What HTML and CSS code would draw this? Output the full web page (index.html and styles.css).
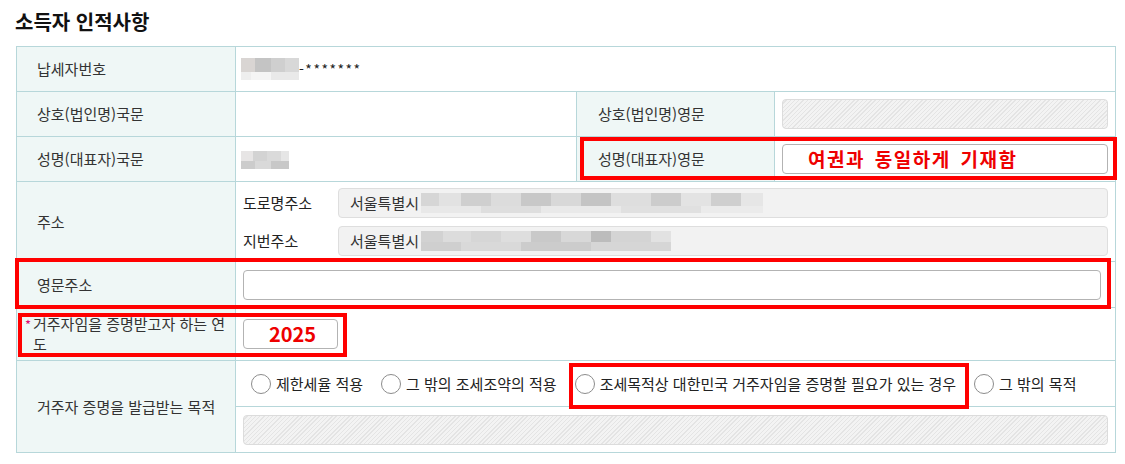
FILE: index.html
```html
<!DOCTYPE html>
<html lang="ko">
<head>
  <meta charset="UTF-8">
  <meta name="viewport" content="width=device-width, initial-scale=1.0">
  <link rel="stylesheet" href="styles.css">
  <title>소득자 인적사항</title>
</head>
<body>
  <div class="sheet">
    <h2 class="title">소득자 인적사항</h2>
    <table class="info">
      <colgroup>
        <col class="c-label">
        <col class="c-value">
        <col class="c-label2">
        <col class="c-value">
      </colgroup>
      <tr class="r45">
        <th>납세자번호</th>
        <td colspan="3"><span class="masked m-id"></span><span class="stars">-*******</span></td>
      </tr>
      <tr class="r45">
        <th>상호(법인명)국문</th>
        <td></td>
        <th class="th2">상호(법인명)영문</th>
        <td><div class="field hatched"></div></td>
      </tr>
      <tr class="r45">
        <th>성명(대표자)국문</th>
        <td><span class="masked m-name"></span></td>
        <th class="th2">성명(대표자)영문</th>
        <td><div class="field plain"><span class="note">여권과 동일하게 기재함</span></div></td>
      </tr>
      <tr class="r80">
        <th>주소</th>
        <td colspan="3">
          <div class="addr">
            <span class="addr-label">도로명주소</span>
            <div class="field grey"><span class="addr-text">서울특별시</span><span class="masked m-road"></span></div>
            <span class="addr-label">지번주소</span>
            <div class="field grey"><span class="addr-text">서울특별시</span><span class="masked m-lot"></span></div>
          </div>
        </td>
      </tr>
      <tr class="r46">
        <th>영문주소</th>
        <td colspan="3"><div class="field plain wide"></div></td>
      </tr>
      <tr class="r53">
        <th class="req"><span class="star">*</span><span>거주자임을 증명받고자 하는 연도</span></th>
        <td colspan="3"><div class="field plain year">2025</div></td>
      </tr>
      <tr class="r46">
        <th rowspan="2">거주자 증명을 발급받는 목적</th>
        <td colspan="3">
          <div class="radios">
            <label class="radio"><span class="dot"></span>제한세율 적용</label>
            <label class="radio"><span class="dot"></span>그 밖의 조세조약의 적용</label>
            <label class="radio"><span class="dot"></span>조세목적상 대한민국 거주자임을 증명할 필요가 있는 경우</label>
            <label class="radio"><span class="dot"></span>그 밖의 목적</label>
          </div>
        </td>
      </tr>
      <tr class="r46">
        <td colspan="3"><div class="field hatched"></div></td>
      </tr>
    </table>

    <!-- annotation boxes drawn over the form -->
    <div class="mark mark-engname"></div>
    <div class="mark mark-engaddr"></div>
    <div class="mark mark-year"></div>
    <div class="mark mark-purpose"></div>
  </div>
</body>
</html>
```

FILE: styles.css
```css
html, body {
  margin: 0;
  padding: 0;
  background: #fff;
}

body {
  font-family: "Noto Sans CJK KR", "Noto Sans", sans-serif;
  font-size: 15px;
  color: #333;
}

.sheet {
  position: relative;
  padding: 0 0 0 16px;
  width: 1100px;
}

.title {
  margin: 0;
  padding: 9px 0 0 0;
  margin-left: -1px;
  height: 37px;
  font-size: 20px;
  line-height: 26px;
  font-weight: bold;
  color: #111;
}

.info {
  border-collapse: collapse;
  table-layout: fixed;
  width: 1100px;
}

.c-label { width: 219px; }
.c-value { width: 341px; }
.c-label2 { width: 198px; }

.info th, .info td {
  border: 1px solid #b7d7da;
  padding: 0 7px;
  vertical-align: middle;
  line-height: 18px;
}

.info th {
  background: #eff7f6;
  font-weight: normal;
  text-align: left;
  padding-left: 20px;
  color: #333;
}

.info th.th2 {
  padding-left: 21px;
}

.r45 { height: 45px; }
.r46 { height: 46px; }
.r53 { height: 53px; }
.r80 { height: 80px; }

.info th.req {
  padding-left: 6px;
  padding-right: 2px;
  line-height: 20px;
}

.req .star {
  color: #e0006a;
  font-size: 13px;
  float: left;
  width: 10px;
  text-align: center;
  margin-top: 1px;
}

.req span + span {
  display: block;
  margin-left: 10px;
}

.field {
  box-sizing: border-box;
  height: 30px;
  border-radius: 4px;
  display: flex;
  align-items: center;
}

.hatched {
  border: 1px solid #dcdcdc;
  background-color: #ececec;
  background-image: repeating-linear-gradient(135deg, #f3f3f3 0 2px, #e4e4e4 2px 3px);
}

.plain {
  border: 1px solid #b3b3b3;
  background: #fff;
}

.grey {
  border: 1px solid #dedede;
  background: #f2f2f2;
}

.wide {
  margin-right: 7px;
}

.note {
  color: #ee0000;
  font-weight: bold;
  font-size: 19px;
  letter-spacing: 1.5px;
  word-spacing: 3px;
  padding-left: 25px;
}

.year {
  width: 95px;
  justify-content: center;
  color: #ee0000;
  font-weight: bold;
  font-size: 20px;
  padding-left: 4px;
}

.stars {
  color: #222;
  vertical-align: middle;
  font-size: 14px;
  letter-spacing: 1.5px;
}

.masked {
  display: inline-block;
  vertical-align: middle;
  filter: blur(0.6px);
}

.m-id {
  width: 58px;
  height: 22px;
  margin-left: -2px;
  background:
    linear-gradient(90deg, #d9d5d3 0 14px, #c4c4c4 14px 30px, #cfcfcf 30px 44px, #d8d8d8 44px 58px) top / 100% 14px no-repeat,
    linear-gradient(90deg, #eeeeee 0 10px, #f5f5f5 10px 30px, #e9e9e9 30px 58px) bottom / 100% 8px no-repeat;
}

.m-name {
  width: 48px;
  height: 18px;
  margin-left: -2px;
  background:
    linear-gradient(90deg, #e7e5e5 0 12px, #d3d3d3 12px 26px, #dadada 26px 40px, #e6e6e6 40px 48px) top / 100% 10px no-repeat,
    linear-gradient(90deg, #cccccc 0 14px, #d9d9d9 14px 30px, #c8c8c8 30px 48px) bottom / 100% 8px no-repeat;
}

.addr {
  display: grid;
  grid-template-columns: 95px 1fr;
  row-gap: 8px;
  align-items: center;
}

.addr-label {
  color: #222;
}

.addr-text {
  padding-left: 11px;
  color: #333;
}

.m-road {
  width: 342px;
  height: 20px;
  margin-left: 2px;
  background:
    linear-gradient(90deg, #d6d6d6 0 18px, #e2e2e2 18px 40px, #cfcfcf 40px 70px, #dcdcdc 70px 100px, #c8c8c8 100px 130px, #d8d8d8 130px 160px, #c4c4c4 160px 190px, #dedede 190px 230px, #cccccc 230px 260px, #e3e3e3 260px 290px, #cfcfcf 290px 320px, #e6e6e6 320px 342px) top / 100% 13px no-repeat,
    linear-gradient(90deg, #e8e8e8 0 60px, #dedede 60px 120px, #e9e9e9 120px 200px, #e0e0e0 200px 280px, #ebebeb 280px 342px) bottom / 100% 7px no-repeat;
}

.m-lot {
  width: 250px;
  height: 20px;
  margin-left: 2px;
  background:
    linear-gradient(90deg, #d2d2d2 0 22px, #dcdcdc 22px 50px, #d6d6d6 50px 80px, #dedede 80px 110px, #c9c9c9 110px 140px, #d8d8d8 140px 170px, #bcbcbc 170px 190px, #d4d4d4 190px 230px, #e2e2e2 230px 250px) top / 100% 11px no-repeat,
    linear-gradient(90deg, #cfcfcf 0 40px, #d9d9d9 40px 100px, #cccccc 100px 170px, #d6d6d6 170px 250px) bottom / 100% 9px no-repeat;
}

.radios {
  display: flex;
  align-items: center;
  column-gap: 18px;
  padding-left: 8px;
  color: #222;
}

.radio {
  display: flex;
  align-items: center;
  column-gap: 5px;
  white-space: nowrap;
}

.dot {
  box-sizing: border-box;
  width: 20px;
  height: 20px;
  border: 1px solid #8c8c8c;
  border-radius: 50%;
  background: #fff;
}

.mark {
  position: absolute;
  box-sizing: border-box;
  border: 4px solid #ff0000;
}

.mark-engname {
  left: 580px;
  top: 137px;
  width: 537px;
  height: 43px;
}

.mark-engaddr {
  left: 15px;
  top: 258px;
  width: 1096px;
  height: 51px;
}

.mark-year {
  left: 18px;
  top: 313px;
  width: 329px;
  height: 44px;
}

.mark-purpose {
  left: 569px;
  top: 363px;
  width: 400px;
  height: 46px;
}
```
